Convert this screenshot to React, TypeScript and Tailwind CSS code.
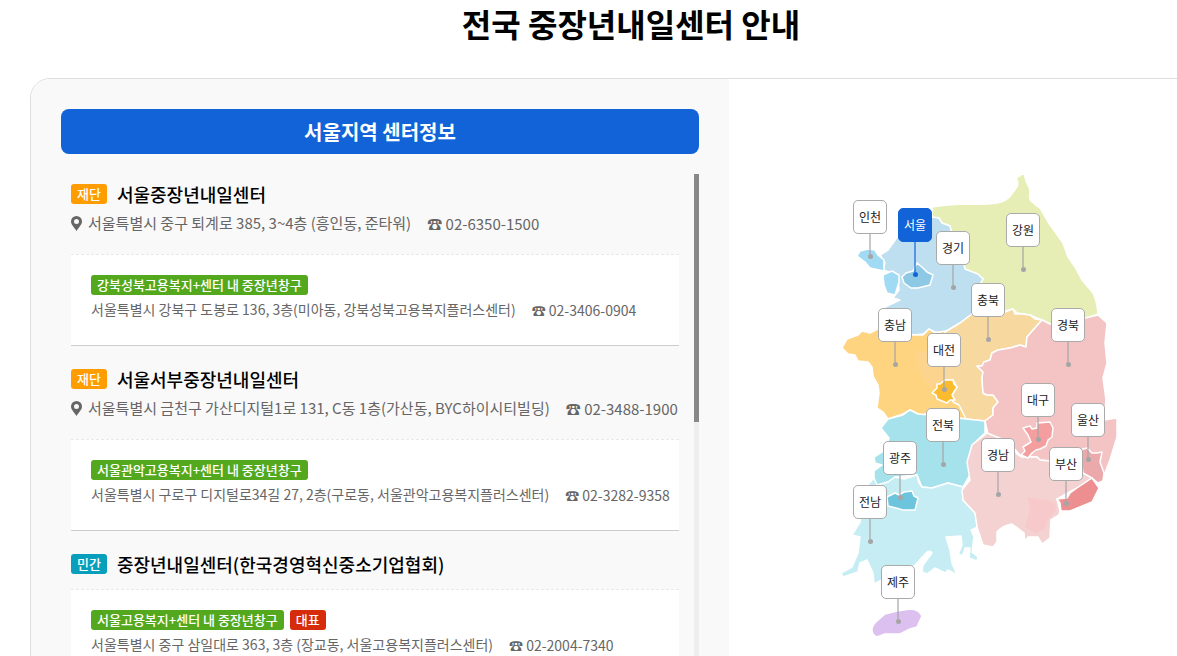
import { useState } from 'react';
import clsx from 'clsx';

interface Branch {
  name: string;
  address: string;
  phone: string;
  main?: boolean;
}

interface Center {
  type: '재단' | '민간';
  name: string;
  address?: string;
  phone?: string;
  branch: Branch;
}

const centers: Center[] = [
  {
    type: '재단',
    name: '서울중장년내일센터',
    address: '서울특별시 중구 퇴계로 385, 3~4층 (흥인동, 준타워)',
    phone: '02-6350-1500',
    branch: {
      name: '강북성북고용복지+센터 내 중장년창구',
      address: '서울특별시 강북구 도봉로 136, 3층(미아동, 강북성북고용복지플러스센터)',
      phone: '02-3406-0904',
    },
  },
  {
    type: '재단',
    name: '서울서부중장년내일센터',
    address: '서울특별시 금천구 가산디지털1로 131, C동 1층(가산동, BYC하이시티빌딩)',
    phone: '02-3488-1900',
    branch: {
      name: '서울관악고용복지+센터 내 중장년창구',
      address: '서울특별시 구로구 디지털로34길 27, 2층(구로동, 서울관악고용복지플러스센터)',
      phone: '02-3282-9358',
    },
  },
  {
    type: '민간',
    name: '중장년내일센터(한국경영혁신중소기업협회)',
    branch: {
      name: '서울고용복지+센터 내 중장년창구',
      address: '서울특별시 중구 삼일대로 363, 3층 (장교동, 서울고용복지플러스센터)',
      phone: '02-2004-7340',
      main: true,
    },
  },
];

// x, y: top left corner of the label, dot: y of the marker below it
const pins = [
  { name: '인천', x: 13, y: 30, dot: 86 },
  { name: '서울', x: 58, y: 38, dot: 104 },
  { name: '경기', x: 96, y: 61, dot: 117 },
  { name: '강원', x: 166, y: 43, dot: 99 },
  { name: '충북', x: 131, y: 113, dot: 169 },
  { name: '충남', x: 38, y: 138, dot: 194 },
  { name: '대전', x: 87, y: 163, dot: 219 },
  { name: '경북', x: 211, y: 138, dot: 194 },
  { name: '대구', x: 181, y: 213, dot: 269 },
  { name: '울산', x: 231, y: 233, dot: 289 },
  { name: '전북', x: 86, y: 238, dot: 294 },
  { name: '경남', x: 141, y: 268, dot: 324 },
  { name: '부산', x: 209, y: 277, dot: 333 },
  { name: '광주', x: 43, y: 271, dot: 327 },
  { name: '전남', x: 13, y: 315, dot: 371 },
  { name: '제주', x: 41, y: 395, dot: 451 },
];

const areas = [
  // 강원
  { fill: '#e6eeb5', d: 'M932 207Q950 204 970 204Q984 205 997 203Q1007 201 1011 195L1017 187Q1019 183 1016 178L1024 173L1026 181L1030 190Q1029 197 1030 200Q1035 205 1040 208L1048 222L1063 243L1068 257L1075 267L1082 280L1093 293Q1097 301 1098 314L1085 319L1068 325L1050 324L1042 320L1030 315L1017 313L1013 309L985 316L970 300L983 279L965 269L960 255L952 235L950 226L942 223L939 218L932 218Z' },
  // 경기
  { fill: '#bddff0', d: 'M905 225L932 217L939 218L942 223L950 226L952 235L962 255L965 269L978 274L983 279L979 286L972 290L972 314L960 323L945 332L935 332L929 329L923 334L913 335L885 322L885 307L900 300L893 298L899 290L898 275L883 270L885 263L880 255L888 250L898 236Z' },
  // 인천
  { fill: '#a0daf3', d: 'M857 256L860 251L868 249L875 250L878 255L884 260L884 271L870 268L865 262Z' },
  { fill: '#a0daf3', d: 'M883 275L892 271L899 275L899 282L895 295L887 293L884 285Z' },
  // 서울
  { fill: '#8dc9e5', d: 'M902 277L906 273L913 271L917 263L923 268L927 272L933 275L930 285L918 288L911 288L904 283Z' },
  // 충남
  { fill: '#ffd481', d: 'M842 348L847 339L858 335L862 331L870 333L885 325L913 335L923 335L929 329L935 333L950 330L960 350L960 403L965 412L966 419L940 416L930 412L923 415L918 414L910 410L903 414L888 419L883 412L877 408L879 393L878 385L873 376L872 367L868 362L858 361L855 355L848 354Z' },
  // 충북
  { fill: '#f7d9a0', d: 'M945 332L960 323L972 314L985 312L1005 312L1013 309L1015 314L1022 314L1030 315L1035 319L1042 320L1034 329L1027 337L1026 347L1020 345L1010 348L998 350L992 353L990 360L984 362L982 366L977 366L983 372L982 378L983 393L987 395L993 395L998 402L993 408L993 415L985 421L966 419L959 405L953 402L952 395L957 387L953 380L940 381L945 350Z' },
  { fill: '#fcd48e', plain: true, d: 'M916 352L936 350L945 366L943 381L930 387L921 374Z' },
  // 대전
  { fill: '#fbbb2e', d: 'M937 384L940 384L945 380L953 380L954 384L957 387L952 395L955 400L950 400L947 403L937 399L936 395L932 393L937 388Z' },
  // 전북
  { fill: '#a5e2eb', d: 'M888 419L903 415L910 410L918 414L930 415L940 416L966 419L985 421L985 433L972 445L970 456L968 462L970 475L963 487L948 483L932 488L922 487L917 475L895 477L888 482L878 486L874 483L874 471L882 465L875 463L874 457L885 450L889 438L881 428Z' },
  // 전남
  { fill: '#c5edf3', d: 'M874 478L877 485L888 482L895 477L904 479L917 475L919 483L922 487L932 488L948 483L963 487L963 500L975 513L978 527L971 530L974 537L972 552L978 557L977 561L969 558L970 548L965 548L963 555L958 555L962 545L961 536L946 537L950 550L952 563L957 575L948 570L945 573L935 568L927 574L922 572L923 565L932 553Q930 550 927 552L915 565L902 577L882 580L874 584L873 573L867 560L860 563L858 572L843 577L841 573L852 567L858 553L860 537L852 535L860 522L865 488Z' },
  // 광주
  { fill: '#6cc5dd', d: 'M887 497L895 493L899 495L904 492L912 491L914 496L918 498L915 510L903 510L896 508L888 506Z' },
  // 경북
  { fill: '#f4c3c4', d: 'M1042 320L1050 324L1068 322L1098 315L1107 323L1105 343L1107 363L1103 378L1106 400L1104 420L1117 418L1117 437L1110 460L1103 478L1085 470L1065 465L1050 461L1040 460L1037 457L1022 457L1010 444L988 434L985 421L993 415L993 408L998 402L993 395L987 395L983 393L982 378L983 372L977 366L982 366L984 362L990 360L992 353L998 350L1010 348L1020 345L1026 347L1027 337L1034 329Z' },
  // 경남
  { fill: '#f4d2d2', d: 'M987 433L997 437L1010 442L1017 454L1022 457L1037 457L1040 460L1050 461L1085 470L1092 478L1077 488L1057 499L1060 511L1059 515L1051 520L1050 538L1042 544L1038 537L1028 537L1025 542L1024 533L1012 524Q1002 526 997 532L997 542L993 547L983 545L977 527L975 513L963 500L962 490L970 480L967 462L972 445Z' },
  { fill: '#f7c9cb', plain: true, d: 'M1027 497L1055 502L1056 510L1048 520L1044 529L1035 533L1025 527L1030 510Z' },
  // 대구
  { fill: '#f59e9f', d: 'M1023 428L1030 426L1032 429L1037 428L1037 423L1050 422L1053 428L1052 437L1048 440L1046 446L1040 449L1036 450L1032 453L1028 458L1021 455L1025 451L1023 447L1031 442L1028 435Z' },
  // 울산
  { fill: '#eba9ac', d: 'M1080 450L1087 448L1092 453L1097 453L1102 452L1100 462L1104 473L1103 481L1098 483L1092 478L1083 473Z' },
  // 부산
  { fill: '#ed8f90', d: 'M1092 478L1099 488L1092 502L1070 511L1061 511L1060 503L1057 499L1067 498L1070 493L1077 488Z' },
  // 제주
  { fill: '#dcc0ef', d: 'M872 630Q872 625 877 621L885 614L897 611L910 609Q919 609 922 616L917 627L910 629L900 634L885 634L877 637Q872 635 872 630Z' },
];

const badgeColors = {
  재단: 'bg-[#ff9c00]',
  민간: 'bg-[#089fbd]',
  green: 'bg-[#53a81e]',
  red: 'bg-[#d62c0c]',
};

function Badge({ color, children }: { color: keyof typeof badgeColors; children: string }) {
  return (
    <span
      className={clsx(
        'h-5 px-1.5 rounded-[3px] text-white text-[13px] leading-5 font-medium whitespace-nowrap',
        badgeColors[color]
      )}
    >
      {children}
    </span>
  );
}

function PinIcon() {
  return (
    <svg viewBox="0 0 11 15" className="w-[11px] h-[15px] mr-1.5 shrink-0" fill="#666">
      <path fillRule="evenodd" d="M5.5 0A5.5 5.5 0 0 0 0 5.5C0 8.4 2.8 11 5.5 15C8.2 11 11 8.4 11 5.5A5.5 5.5 0 0 0 5.5 0ZM5.5 3a2.5 2.5 0 1 1 0 5a2.5 2.5 0 0 1 0-5Z" />
    </svg>
  );
}

function Phone({ number }: { number: string }) {
  return (
    <a href={`tel:${number}`} className="ml-4 mt-0.5">
      ☎ {number}
    </a>
  );
}

function CenterItem({ center }: { center: Center }) {
  const { branch } = center;
  return (
    <li className="pt-[23px] first:pt-2.5 border-b border-[#ccc]">
      <div className="pb-[15px]">
        <div className="flex items-center h-5">
          <Badge color={center.type}>{center.type}</Badge>
          <h3 className="ml-2.5 text-[18px] font-medium text-black">{center.name}</h3>
        </div>
        {center.address && (
          <p className="flex items-center h-[22px] mt-2 mb-[5px] text-[15px] whitespace-nowrap">
            <PinIcon />
            {center.address}
            {center.phone && <Phone number={center.phone} />}
          </p>
        )}
      </div>
      <div className="px-5 pt-5 pb-[22px] bg-white border-t border-dashed border-[#e8e8e8]">
        <div className="flex gap-1.5">
          <Badge color="green">{branch.name}</Badge>
          {branch.main && <Badge color="red">대표</Badge>}
        </div>
        <p className="flex items-center h-7 text-[14px] whitespace-nowrap">
          {branch.address}
          <Phone number={branch.phone} />
        </p>
      </div>
    </li>
  );
}

function RegionMap({ region, onSelect }: { region: string; onSelect: (name: string) => void }) {
  return (
    <div className="relative w-[280px] h-[470px]">
      <svg viewBox="840 170 280 470" className="w-full h-full">
        {areas.map((area) => (
          <path
            key={area.d}
            d={area.d}
            fill={area.fill}
            stroke={area.plain ? 'none' : '#fff'}
            strokeWidth="1.5"
            strokeLinejoin="round"
          />
        ))}
      </svg>
      {pins.map((pin) => {
        const active = pin.name === region;
        return (
          <div key={pin.name} className="absolute w-[34px]" style={{ left: pin.x, top: pin.y }}>
            <button
              type="button"
              onClick={() => onSelect(pin.name)}
              className={clsx(
                'block w-full h-[34px] border rounded-[5px] text-[12px] leading-8',
                active ? 'bg-[#1363d8] border-[#1363d8] text-white' : 'bg-white border-[#aaa] text-[#222]'
              )}
            >
              {pin.name}
            </button>
            <div
              className={clsx('w-0.5 mx-auto', active ? 'bg-[#1363d8]/60' : 'bg-[#a5a5a5]/60')}
              style={{ height: pin.dot - pin.y - 36 }}
            />
            <div className={clsx('w-[5px] h-[5px] mx-auto rounded-full', active ? 'bg-[#1363d8]' : 'bg-[#a5a5a5]')} />
          </div>
        );
      })}
    </div>
  );
}

export default function App() {
  const [region, setRegion] = useState('서울');

  return (
    <main className="h-screen overflow-hidden bg-white pl-[30px] font-['Noto_Sans_CJK_KR','Noto_Sans',sans-serif] text-[#666]">
      <div className="min-w-[1202px]">
        <h1 className="h-[78px] text-center text-[32px] leading-[46px] font-bold text-black">
          전국 중장년내일센터 안내
        </h1>

        <section className="grid grid-cols-[698px_1fr] border border-[#ddd] rounded-[20px] overflow-hidden">
          {/* Center list */}
          <div className="p-[30px] bg-[#f9f9f9]">
            <h2 className="h-[45px] rounded-lg bg-[#1363d8] text-center text-[20px] leading-[45px] font-bold text-white">
              {region}지역 센터정보
            </h2>
            <div className="flex mt-5">
              <ul className="flex-1 min-w-0 pl-2.5 pr-[15px]">
                {centers.map((center) => (
                  <CenterItem key={center.name} center={center} />
                ))}
              </ul>
              <div className="w-[5px] shrink-0 bg-[#eee]">
                <div className="h-[248px] bg-[#888]" />
              </div>
            </div>
          </div>

          {/* Map */}
          <div className="flex justify-center pt-[91px]">
            <RegionMap region={region} onSelect={setRegion} />
          </div>
        </section>
      </div>
    </main>
  );
}
